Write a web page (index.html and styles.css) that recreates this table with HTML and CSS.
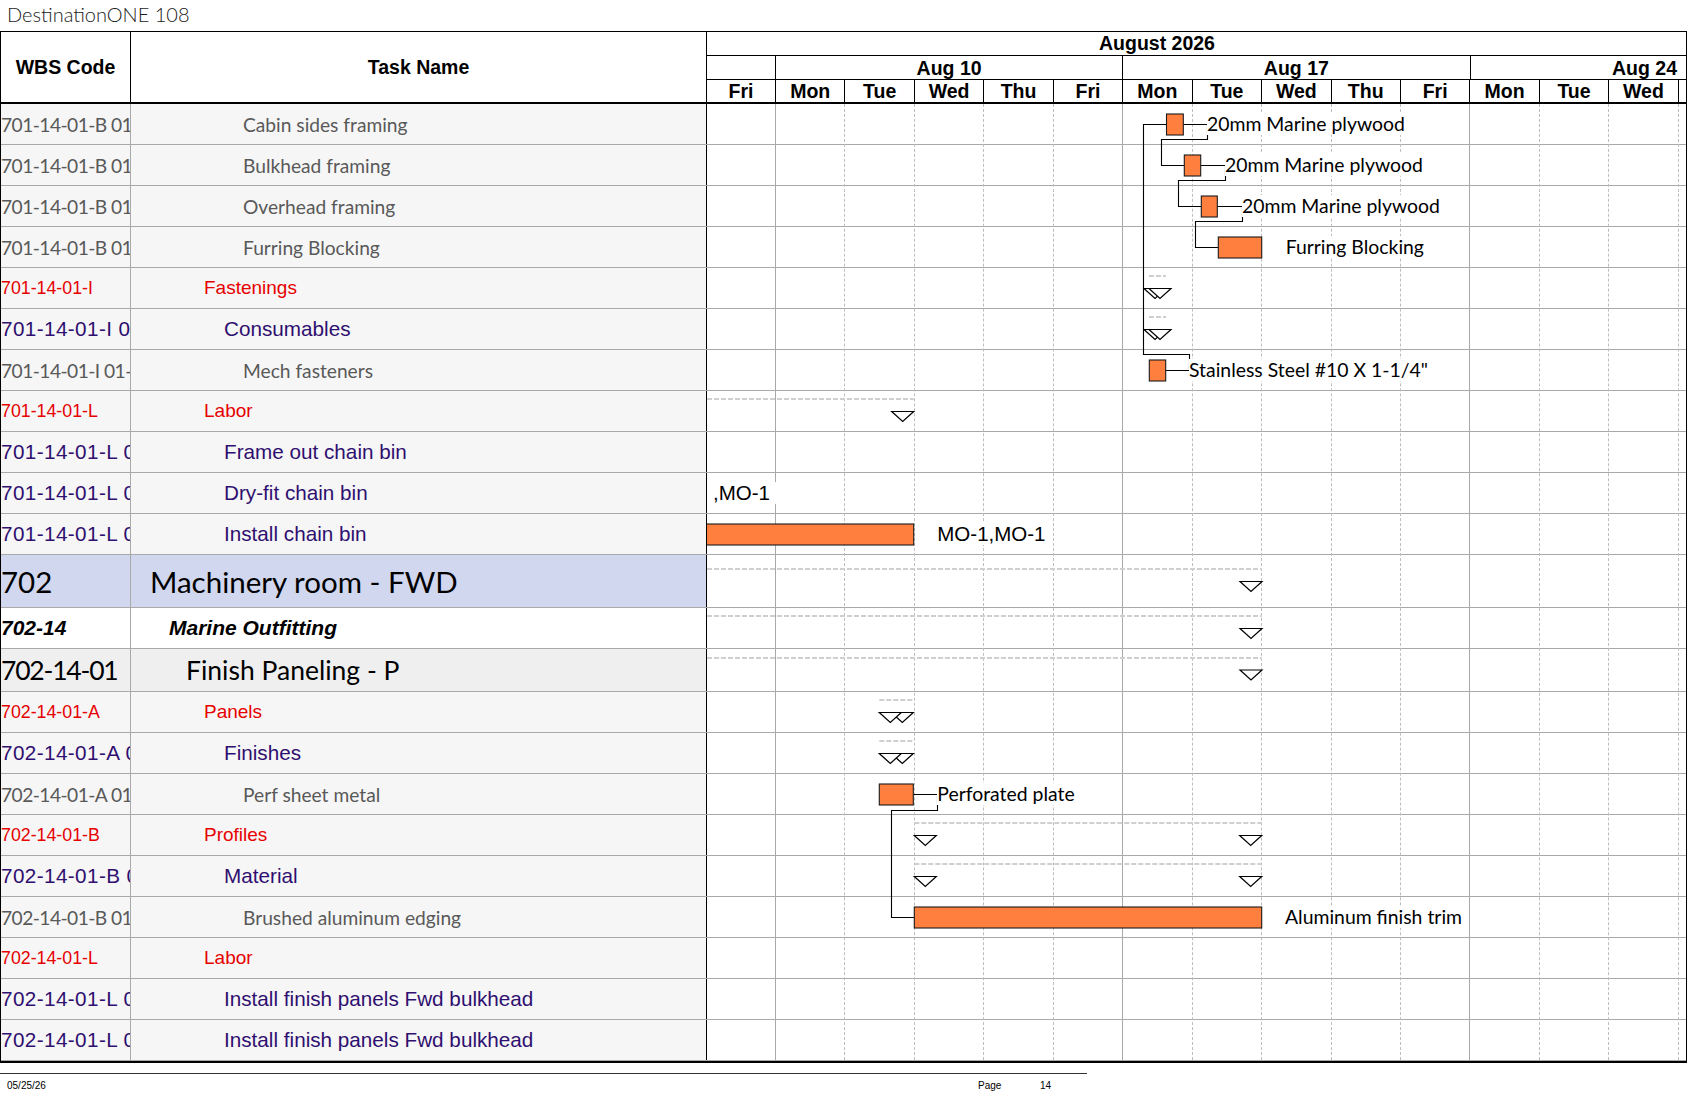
FILE: index.html
```html
<!DOCTYPE html>
<html>
<head>
<meta charset="utf-8">
<title>DestinationONE 108</title>
<link rel="stylesheet" href="styles.css">
</head>
<body>
<div class="title">DestinationONE 108</div>
<div class="sheet">
  <div class="head">
    <div class="h-wbs">WBS Code</div>
    <div class="h-task">Task Name</div>
    <div class="h-gantt">
      <div class="h-month">August 2026</div>
      <div class="h-weeks">
        <div class="wk w0"></div>
        <div class="wk w5">Aug 10</div>
        <div class="wk w5">Aug 17</div>
        <div class="wk wl">Aug 24</div>
      </div>
      <div class="h-days">
        <div class="hd d0">Fri</div>
        <div class="hd d">Mon</div><div class="hd d">Tue</div><div class="hd d">Wed</div><div class="hd d">Thu</div><div class="hd d">Fri</div>
        <div class="hd d">Mon</div><div class="hd d">Tue</div><div class="hd d">Wed</div><div class="hd d">Thu</div><div class="hd d">Fri</div>
        <div class="hd d">Mon</div><div class="hd d">Tue</div><div class="hd d">Wed</div>
        <div class="hd dl"></div>
      </div>
    </div>
  </div>
  <div class="body">
    <div class="row t-g"><div class="c-wbs">701-14-01-B 01</div><div class="c-task i6">Cabin sides framing</div><div class="c-gantt"></div></div>
    <div class="row t-g"><div class="c-wbs">701-14-01-B 01</div><div class="c-task i6">Bulkhead framing</div><div class="c-gantt"></div></div>
    <div class="row t-g"><div class="c-wbs">701-14-01-B 01</div><div class="c-task i6">Overhead framing</div><div class="c-gantt"></div></div>
    <div class="row t-g"><div class="c-wbs">701-14-01-B 01</div><div class="c-task i6">Furring Blocking</div><div class="c-gantt"></div></div>
    <div class="row t-r"><div class="c-wbs">701-14-01-I</div><div class="c-task i4">Fastenings</div><div class="c-gantt"></div></div>
    <div class="row t-p"><div class="c-wbs">701-14-01-I 01</div><div class="c-task i5">Consumables</div><div class="c-gantt"></div></div>
    <div class="row t-g"><div class="c-wbs">701-14-01-I 01-01</div><div class="c-task i6">Mech fasteners</div><div class="c-gantt"></div></div>
    <div class="row t-r"><div class="c-wbs">701-14-01-L</div><div class="c-task i4">Labor</div><div class="c-gantt"></div></div>
    <div class="row t-p"><div class="c-wbs">701-14-01-L 01</div><div class="c-task i5">Frame out chain bin</div><div class="c-gantt"></div></div>
    <div class="row t-p"><div class="c-wbs">701-14-01-L 02</div><div class="c-task i5">Dry-fit chain bin</div><div class="c-gantt"></div></div>
    <div class="row t-p"><div class="c-wbs">701-14-01-L 03</div><div class="c-task i5">Install chain bin</div><div class="c-gantt"></div></div>
    <div class="row tall t-big"><div class="c-wbs">702</div><div class="c-task i1">Machinery room - FWD</div><div class="c-gantt"></div></div>
    <div class="row t-bi"><div class="c-wbs">702-14</div><div class="c-task i2">Marine Outfitting</div><div class="c-gantt"></div></div>
    <div class="row mid t-mid"><div class="c-wbs">702-14-01</div><div class="c-task i3">Finish Paneling - P</div><div class="c-gantt"></div></div>
    <div class="row t-r"><div class="c-wbs">702-14-01-A</div><div class="c-task i4">Panels</div><div class="c-gantt"></div></div>
    <div class="row t-p"><div class="c-wbs">702-14-01-A 01</div><div class="c-task i5">Finishes</div><div class="c-gantt"></div></div>
    <div class="row t-g"><div class="c-wbs">702-14-01-A 01-01</div><div class="c-task i6">Perf sheet metal</div><div class="c-gantt"></div></div>
    <div class="row t-r"><div class="c-wbs">702-14-01-B</div><div class="c-task i4">Profiles</div><div class="c-gantt"></div></div>
    <div class="row t-p"><div class="c-wbs">702-14-01-B 01</div><div class="c-task i5">Material</div><div class="c-gantt"></div></div>
    <div class="row t-g"><div class="c-wbs">702-14-01-B 01-01</div><div class="c-task i6">Brushed aluminum edging</div><div class="c-gantt"></div></div>
    <div class="row t-r"><div class="c-wbs">702-14-01-L</div><div class="c-task i4">Labor</div><div class="c-gantt"></div></div>
    <div class="row t-p"><div class="c-wbs">702-14-01-L 01</div><div class="c-task i5">Install finish panels Fwd bulkhead</div><div class="c-gantt"></div></div>
    <div class="row t-p"><div class="c-wbs">702-14-01-L 02</div><div class="c-task i5">Install finish panels Fwd bulkhead</div><div class="c-gantt"></div></div>

    <div class="gantt-layer">
      <div class="daygrid">
        <div class="dc d0 wkend"></div>
        <div class="dc d"></div><div class="dc d"></div><div class="dc d"></div><div class="dc d"></div><div class="dc d wkend"></div>
        <div class="dc d"></div><div class="dc d"></div><div class="dc d"></div><div class="dc d"></div><div class="dc d wkend"></div>
        <div class="dc d"></div><div class="dc d"></div><div class="dc d"></div>
        <div class="dc dl"></div>
      </div>
      <svg class="chart" width="979" height="957" viewBox="707 104 979 957" xmlns="http://www.w3.org/2000/svg">
        <g class="sumlines">
          <line x1="1149" y1="276" x2="1166" y2="276"/>
          <line x1="1149" y1="317" x2="1166" y2="317"/>
          <line x1="707" y1="399" x2="913.7" y2="399"/>
          <line x1="707" y1="569" x2="1262" y2="569"/>
          <line x1="707" y1="616" x2="1262" y2="616"/>
          <line x1="707" y1="658" x2="1262" y2="658"/>
          <line x1="879.3" y1="700" x2="913.3" y2="700"/>
          <line x1="879.3" y1="741" x2="913.3" y2="741"/>
          <line x1="914.3" y1="823" x2="1261.7" y2="823"/>
          <line x1="914.3" y1="864" x2="1261.7" y2="864"/>
        </g>
        <g class="tris">
          <polygon points="1144,288.5 1166,288.5 1155,298.5"/>
          <polygon points="1149,288.5 1171,288.5 1160,298.5"/>
          <polygon points="1144,329.5 1166,329.5 1155,339.5"/>
          <polygon points="1149,329.5 1171,329.5 1160,339.5"/>
          <polygon points="891.7,411.5 913.7,411.5 902.7,421.5"/>
          <polygon points="1240,581.5 1262,581.5 1251,591.5"/>
          <polygon points="1240,628.5 1262,628.5 1251,638.5"/>
          <polygon points="1240,670 1262,670 1251,680"/>
          <polygon points="891.3,712.5 913.3,712.5 902.3,722.5"/>
          <polygon points="879.3,712.5 901.3,712.5 890.3,722.5"/>
          <polygon points="891.3,753.5 913.3,753.5 902.3,763.5"/>
          <polygon points="879.3,753.5 901.3,753.5 890.3,763.5"/>
          <polygon points="914.3,835.5 936.3,835.5 925.3,845.5"/>
          <polygon points="1239.7,835.5 1261.7,835.5 1250.7,845.5"/>
          <polygon points="914.3,876.5 936.3,876.5 925.3,886.5"/>
          <polygon points="1239.7,876.5 1261.7,876.5 1250.7,886.5"/>
        </g>
        <g class="links">
          <path d="M1165.7 370.5 H1189.5 V354.5 H1143.5 V124.5 H1166.5"/>
          <path d="M1183.3 124.5 H1207.5 V139.5 H1161.5 V165.5 H1184.3"/>
          <path d="M1200.7 165.5 H1225.5 V180.5 H1178.5 V206.5 H1201.3"/>
          <path d="M1217.3 206.5 H1242.5 V221.5 H1195.5 V247.5 H1218.3"/>
          <path d="M913.3 794.5 H937.5 V810.5 H891.5 V917.5 H914.3"/>
        </g>
        <g class="bars">
          <rect x="1166.5" y="114" width="16.8" height="21"/>
          <rect x="1184.3" y="155" width="16.4" height="21"/>
          <rect x="1201.3" y="196" width="16" height="21"/>
          <rect x="1218.3" y="237" width="43.4" height="21"/>
          <rect x="1149.3" y="360" width="16.4" height="21"/>
          <rect x="706" y="524" width="207.7" height="21"/>
          <rect x="879.3" y="784" width="34" height="21"/>
          <rect x="914.3" y="907" width="347.4" height="21"/>
        </g>
      </svg>
      <div class="lbl cal" style="left:500px;top:9px">20mm Marine plywood</div>
      <div class="lbl cal" style="left:518px;top:50px">20mm Marine plywood</div>
      <div class="lbl cal" style="left:535px;top:91px">20mm Marine plywood</div>
      <div class="lbl cal" style="left:578.7px;top:132px">Furring Blocking</div>
      <div class="lbl cal" style="left:482px;top:255px">Stainless Steel #10 X 1-1/4"</div>
      <div class="lbl ari mo" style="left:0px;top:378px">,MO-1</div>
      <div class="lbl ari" style="left:230.3px;top:419px">MO-1,MO-1</div>
      <div class="lbl cal" style="left:230.3px;top:679px">Perforated plate</div>
      <div class="lbl cal" style="left:578px;top:802px">Aluminum finish trim</div>
    </div>
  </div>
</div>
<div class="footer">
  <span class="f-date">05/25/26</span>
  <span class="f-page">Page</span>
  <span class="f-num">14</span>
</div>
</body>
</html>
```

FILE: styles.css
```css
html, body {
  margin: 0;
  padding: 0;
}
body {
  width: 1687px;
  height: 1097px;
  overflow: hidden;
  background: #fff;
  font-family: "Liberation Sans", Arial, sans-serif;
  color: #000;
}
.title {
  height: 31px;
  box-sizing: border-box;
  padding: 2px 0 0 7px;
  font-family: Lato, "DejaVu Sans", sans-serif;
  font-weight: 300;
  font-size: 20px;
  line-height: 24px;
  color: #1a1a1a;
}
.sheet {
  width: 1687px;
  box-sizing: border-box;
  border-left: 1px solid #000;
  border-right: 1px solid #000;
  border-bottom: 2px solid #000;
}
.head {
  display: flex;
  height: 70px;
  border-top: 1px solid #000;
  border-bottom: 2px solid #000;
}
.h-wbs, .h-task {
  box-sizing: border-box;
  border-right: 1px solid #000;
  display: flex;
  align-items: center;
  justify-content: center;
  font-weight: bold;
  font-size: 19.5px;
  padding-top: 1px;
}
.h-wbs { width: 130px; }
.h-task { width: 576px; }
.h-gantt {
  flex: 1;
  display: flex;
  flex-direction: column;
  font-weight: bold;
  font-size: 19.5px;
}
.h-month {
  height: 23px;
  line-height: 23px;
  border-bottom: 1px solid #000;
  text-align: center;
  padding-right: 79px;
}
.h-weeks {
  height: 23px;
  border-bottom: 1px solid #000;
  display: flex;
  line-height: 24px;
}
.wk {
  box-sizing: border-box;
  text-align: center;
  border-right: 1px solid #000;
}
.w0 { width: 69px; }
.w5 { width: 347.25px; }
.wl {
  flex: 1;
  border-right: none;
  text-align: right;
  padding-right: 9px;
}
.h-days {
  height: 22px;
  display: flex;
  line-height: 23px;
}
.hd {
  box-sizing: border-box;
  text-align: center;
  border-right: 1px solid #000;
}
.d0 { width: 69px; }
.d { width: 69.45px; }
.dl { flex: 1; border-right: none; }

.body {
  position: relative;
}
.row {
  display: flex;
  height: 41px;
  box-sizing: border-box;
  border-bottom: 1px solid #a9a9a9;
}
.row:last-of-type { border-bottom: none; }
.row.tall { height: 53px; }
.row.mid { height: 43px; }
.c-wbs, .c-task {
  box-sizing: border-box;
  display: flex;
  align-items: center;
  white-space: nowrap;
  overflow: hidden;
  background: #f6f6f6;
}
.c-wbs {
  width: 130px;
  border-right: 1px solid #a9a9a9;
}
.c-task {
  width: 576px;
  border-right: 1px solid #000;
}
.c-gantt {
  flex: 1;
  background: #fff;
}
.i1 { padding-left: 19px; }
.i2 { padding-left: 38px; }
.i3 { padding-left: 55px; }
.i4 { padding-left: 73px; }
.i5 { padding-left: 93px; }
.i6 { padding-left: 112px; }

.t-g .c-wbs, .t-g .c-task {
  font-family: Lato, "Open Sans", sans-serif;
  font-size: 19.2px;
  color: #595959;
}
.t-g .c-wbs { letter-spacing: -0.55px; }
.t-r .c-wbs, .t-r .c-task {
  font-size: 19px;
  color: #e60000;
}
.t-r .c-wbs { font-size: 17.8px; }
.t-p .c-wbs, .t-p .c-task {
  font-size: 20.7px;
  color: #2f0f6f;
}
.t-p .c-wbs { letter-spacing: 0.4px; }
.t-big .c-wbs, .t-big .c-task {
  font-family: Lato, "Open Sans", sans-serif;
  font-size: 29.5px;
  color: #000;
  background: #d0d7ef;
}
.t-bi .c-wbs, .t-bi .c-task {
  font-weight: bold;
  font-style: italic;
  font-size: 21px;
  color: #000;
  background: #fff;
}
.t-mid .c-wbs, .t-mid .c-task {
  font-family: Lato, "Open Sans", sans-serif;
  font-size: 26.5px;
  color: #000;
  background: #efefef;
}
.t-mid .c-wbs { letter-spacing: -1.2px; }

.gantt-layer {
  position: absolute;
  left: 706px;
  top: 0;
  width: 979px;
  height: 956px;
}
.daygrid {
  position: absolute;
  inset: 0;
  display: flex;
}
.dc {
  box-sizing: border-box;
  border-right: 1px dashed #bdbdbd;
}
.dc.wkend {
  border-right: 1px solid #a9a9a9;
}
.dc.dl { border-right: none; }
.chart {
  position: absolute;
  left: 0;
  top: 0;
}
.sumlines line {
  stroke: #cfcfcf;
  stroke-width: 2;
  stroke-dasharray: 5 2;
}
.tris polygon {
  fill: #fff;
  stroke: #000;
  stroke-width: 1.2;
}
.links path {
  fill: none;
  stroke: #000;
  stroke-width: 1.1;
}
.bars rect {
  fill: #ff7f3f;
  stroke: #1a1a1a;
  stroke-width: 1.1;
}
.lbl {
  position: absolute;
  height: 22px;
  line-height: 22px;
  background: #fff;
  white-space: nowrap;
  color: #000;
}
.lbl.cal {
  font-family: Lato, "Open Sans", sans-serif;
  font-size: 19.4px;
}
.lbl.ari {
  font-family: "Liberation Sans", Arial, sans-serif;
  font-size: 20.5px;
}
.lbl.mo {
  padding-left: 6px;
  width: 63px;
}

.footer {
  position: relative;
  width: 1087px;
  margin-top: 10px;
  border-top: 1px solid #333;
  height: 24px;
  font-family: "Liberation Sans", Arial, sans-serif;
  font-size: 10px;
  color: #000;
}
.footer span {
  position: absolute;
  top: 6px;
}
.f-date { left: 7px; }
.f-page { left: 978px; }
.f-num { left: 1040px; }
```
